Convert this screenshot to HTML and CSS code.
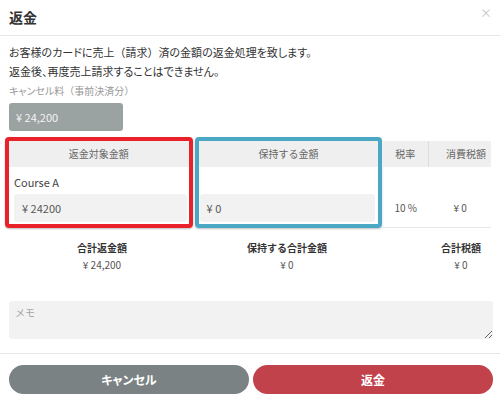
FILE: index.html
```html
<!DOCTYPE html>
<html lang="ja">
<head>
<meta charset="utf-8">
<link rel="stylesheet" href="styles.css">
</head>
<body>
<div class="modal">
  <div class="modal-header">
    <div class="title">返金</div>
    <div class="close">×</div>
  </div>
  <div class="modal-body">
    <p class="desc">お客様のカードに売上<span class="fw">（</span>請求<span class="fw">）</span>済の金額の返金処理を致します。<br>返金後、再度売上請求することはできません。</p>
    <div class="label">キャンセル料<span class="fw">（</span>事前決済分<span class="fw">）</span></div>
    <div class="fee-box">¥ 24,200</div>

    <div class="items">
      <div class="hl hl-red">
        <div class="th">返金対象金額</div>
        <div class="course">Course A</div>
        <div class="amount amount-red">¥ 24200</div>
      </div>
      <div class="hl hl-blue">
        <div class="th">保持する金額</div>
        <div class="course"></div>
        <div class="amount amount-blue">¥ 0</div>
      </div>
      <div class="col col-rate">
        <div class="th th-sep">税率</div>
        <div class="td">10 %</div>
      </div>
      <div class="col col-tax">
        <div class="th th-shift">消費税額</div>
        <div class="td">¥ 0</div>
      </div>
    </div>

    <div class="totals">
      <div class="total">
        <div class="total-label">合計返金額</div>
        <div class="total-value">¥ 24,200</div>
      </div>
      <div class="total">
        <div class="total-label">保持する合計金額</div>
        <div class="total-value">¥ 0</div>
      </div>
      <div class="total"></div>
      <div class="total">
        <div class="total-label">合計税額</div>
        <div class="total-value">¥ 0</div>
      </div>
    </div>

    <textarea class="memo" placeholder="メモ"></textarea>
  </div>
  <div class="modal-footer">
    <button class="btn btn-cancel">キャンセル</button>
    <button class="btn btn-refund">返金</button>
  </div>
</div>
</body>
</html>
```

FILE: styles.css
```css
* { box-sizing: border-box; }
html, body { margin: 0; padding: 0; background: #fff; }
body {
  font-family: "Noto Sans CJK JP", "Noto Sans", sans-serif;
  color: #333;
  width: 500px;
  height: 400px;
  overflow: hidden;
}
.modal-header {
  height: 36px;
  border-bottom: 1px solid #e6e6e6;
  display: flex;
  align-items: center;
  justify-content: space-between;
  padding: 0 9px;
}
.title {
  font-size: 14px;
  font-weight: 700;
  color: #333;
  line-height: 20px;
  margin-top: -2px;
}
.close {
  font-size: 12px;
  color: #c4c4c4;
  line-height: 14px;
  margin-top: -9px;
  margin-right: -1px;
}
.modal-body {
  padding: 7px 9px 0;
}
.desc {
  margin: 0;
  font-size: 11px;
  line-height: 19px;
  font-feature-settings: "palt";
  color: #333;
}
.fw { font-feature-settings: normal; }
.label {
  margin-top: 3px;
  font-size: 10px;
  line-height: 14px;
  color: #999;
  font-feature-settings: "palt";
}
.fee-box {
  margin-top: 5px;
  width: 114px;
  height: 28px;
  background: #9aa2a2;
  border-radius: 3px;
  color: #f4f4f4;
  font-size: 11px;
  line-height: 28px;
  padding-left: 7px;
}
.items {
  display: flex;
  margin-top: 6px;
  margin-left: -4px;
}
.hl {
  width: 188px;
  border: 4px solid;
  border-radius: 4px;
  padding-bottom: 2px;
  box-shadow: 0 1px 2px rgba(0,0,0,0.25);
}
.hl-red { border-color: #e8212b; }
.hl-blue { border-color: #4aa8c4; margin-left: 2px; }
.th {
  height: 26px;
  background: #efefef;
  color: #666;
  font-size: 10px;
  line-height: 26px;
  text-align: center;
}
.course {
  height: 27px;
  padding: 7px 0 0 5px;
  font-size: 11px;
  line-height: 16px;
  color: #444;
}
.amount {
  height: 28px;
  background: #f2f2f2;
  border-radius: 3px;
  font-size: 11px;
  line-height: 28px;
  color: #555;
}
.amount-red { margin: 0 2px 0 5px; padding-left: 8px; }
.amount-blue { margin: 0 3px 0 1px; padding-left: 7px; }
.col {
  margin-top: 4px;
  border-bottom: 1px solid #e6e6e6;
  height: 87px;
}
.col-rate { width: 47px; }
.col-tax { width: 62px; }
.th-sep { border-right: 1px solid #dcdcdc; }
.th-shift { padding-left: 12px; }
.td {
  padding-top: 27px;
  line-height: 28px;
  font-size: 10px;
  text-align: center;
  color: #555;
}
.totals {
  display: grid;
  grid-template-columns: 186px 184px 51px 62px;
  margin-top: 11px;
}
.total { text-align: center; }
.total-label {
  font-size: 10px;
  font-weight: 700;
  line-height: 17px;
  color: #333;
}
.total-value {
  font-size: 10px;
  line-height: 17px;
  color: #555;
}
.memo {
  display: block;
  width: 484px;
  height: 38px;
  margin-top: 28px;
  background: #f2f2f2;
  border: none;
  border-radius: 3px;
  padding: 5px 6px;
  font-family: "Noto Sans CJK JP", sans-serif;
  font-size: 10px;
  line-height: 14px;
  color: #333;
  outline: none;
}
.memo::placeholder { color: #a5a5a5; }
.modal-footer {
  margin-top: 14px;
  border-top: 1px solid #e6e6e6;
  padding: 11px 7px 0 9px;
  display: flex;
  gap: 4px;
}
.btn {
  flex: 1;
  height: 29px;
  border: none;
  border-radius: 15px;
  color: #fff;
  font-family: "Noto Sans CJK JP", sans-serif;
  font-size: 12px;
  font-weight: 700;
  line-height: 29px;
  padding: 0;
  font-feature-settings: "palt";
}
.btn-cancel { background: #7b8283; }
.btn-refund { background: #c1424a; }
```
